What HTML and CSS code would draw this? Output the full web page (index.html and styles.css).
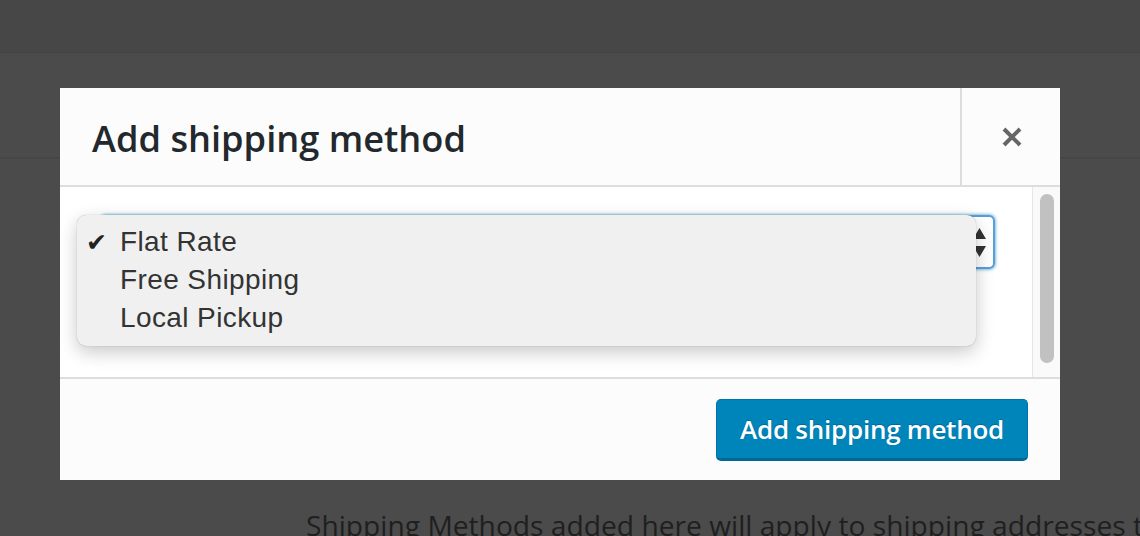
FILE: index.html
```html
<!DOCTYPE html>
<html>
<head>
<meta charset="utf-8">
<link rel="stylesheet" href="styles.css">
</head>
<body>
<div class="page">
  <div class="band band-top"></div>
  <div class="band band-sub"></div>
  <div class="content">
    <p class="desc">Shipping Methods added here will apply to shipping addresses that match this zone.</p>
  </div>
</div>

<div class="modal">
  <header class="modal-head">
    <h1 class="modal-title">Add shipping method</h1>
    <button class="modal-close" aria-label="Close">
      <svg width="22" height="22" viewBox="0 0 22 22"><path d="M3 3 L19 19 M19 3 L3 19" stroke="#666" stroke-width="4" stroke-linecap="butt"/></svg>
    </button>
  </header>
  <div class="modal-body">
    <div class="body-inner">
      <div class="select">
        <span class="select-arrows">
          <svg width="13" height="29" viewBox="0 0 13 29"><path d="M6.5 0 L13 11 L0 11 Z M0 18 L13 18 L6.5 29 Z" fill="#333"/></svg>
        </span>
      </div>
      <ul class="dropdown">
        <li class="opt checked"><span class="check">✔</span>Flat Rate</li>
        <li class="opt">Free Shipping</li>
        <li class="opt">Local Pickup</li>
      </ul>
    </div>
    <div class="scrollbar"><div class="thumb"></div></div>
  </div>
  <footer class="modal-foot">
    <button class="btn-primary">Add shipping method</button>
  </footer>
</div>
</body>
</html>
```
FILE: styles.css
```css
html, body {
  margin: 0;
  padding: 0;
}
body {
  width: 1140px;
  height: 536px;
  overflow: hidden;
  background: #4b4b4b;
  font-family: "Open Sans", "Liberation Sans", sans-serif;
  position: relative;
}
.page {
  display: flex;
  flex-direction: column;
}
.band-top {
  height: 52px;
  background: #474747;
  border-bottom: 1px solid #424242;
}
.band-sub {
  height: 104px;
  background: #4b4b4b;
  border-bottom: 2px solid #464646;
}
.content {
  padding-left: 306px;
}
.desc {
  margin: 346px 0 0;
  font-size: 28.2px;
  line-height: 40px;
  color: #1f1f1f;
  white-space: nowrap;
}

.modal {
  position: absolute;
  left: 60px;
  top: 88px;
  width: 1000px;
  height: 392px;
  background: #fcfcfc;
  display: flex;
  flex-direction: column;
}
.modal-head {
  height: 97px;
  border-bottom: 2px solid #dddddd;
  display: flex;
  align-items: stretch;
}
.modal-title {
  flex: 1;
  margin: 0;
  padding-left: 32px;
  font-size: 36.2px;
  font-weight: 600;
  color: #23282d;
  line-height: 100px;
}
.modal-close {
  width: 100px;
  border: none;
  border-left: 2px solid #dddddd;
  background: transparent;
  display: flex;
  align-items: center;
  justify-content: center;
  padding: 0 0 0 2px;
}
.modal-body {
  height: 190px;
  display: flex;
  border-bottom: 2px solid #dddddd;
  background: #ffffff;
}
.body-inner {
  flex: 1;
  position: relative;
  padding: 28px 0 0 40px;
}
.select {
  border: 2px solid #5b9dd9;
  border-radius: 6px;
  box-shadow: 0 0 3px 1px rgba(30, 140, 190, 0.55);
  background: #fff;
  display: flex;
  justify-content: flex-end;
  align-items: center;
  padding-right: 7px;
  box-sizing: border-box;
  width: 895px;
  height: 54px;
}
.select-arrows {
  display: flex;
}
.dropdown {
  position: absolute;
  left: 17px;
  top: 28px;
  width: 899px;
  height: 131px;
  margin: 0;
  padding: 8px 0 0;
  box-sizing: border-box;
  list-style: none;
  background: #f0f0f0;
  border-radius: 9px;
  box-shadow: 0 0 1px rgba(0,0,0,0.35), 0 6px 18px rgba(0,0,0,0.22);
  font-family: "Liberation Sans", Arial, sans-serif;
  font-size: 28px;
  color: #333;
}
.opt {
  height: 38px;
  line-height: 38px;
  padding-left: 43px;
  position: relative;
  letter-spacing: 0.4px;
}
.check {
  position: absolute;
  left: 9px;
  top: 1px;
  font-size: 25px;
  font-family: "DejaVu Sans", sans-serif;
  color: #222;
  letter-spacing: 0;
}
.scrollbar {
  width: 28px;
  border-left: 1px solid #e6e6e6;
  background: #fafafa;
  padding: 7px 6px 14px 7px;
  box-sizing: border-box;
  display: flex;
}
.thumb {
  flex: 1;
  background: #c1c1c1;
  border-radius: 8px;
}
.modal-foot {
  flex: 1;
  display: flex;
  justify-content: flex-end;
  align-items: center;
  padding-right: 32px;
}
.btn-primary {
  width: 312px;
  height: 62px;
  background: #0085ba;
  border: 1px solid #0073aa;
  border-bottom: 3px solid #006799;
  border-radius: 5px;
  color: #fff;
  font-family: "Open Sans", sans-serif;
  font-size: 26px;
  font-weight: 600;
  letter-spacing: -0.25px;
  padding: 0;
  text-shadow: 0 -1px 1px #006799;
}
```
